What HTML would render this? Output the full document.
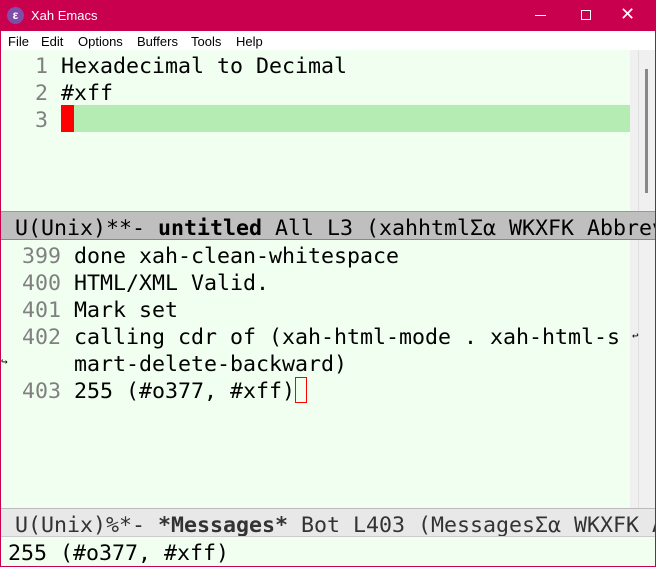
<!DOCTYPE html>
<html><head><meta charset="utf-8"><style>
*{margin:0;padding:0;box-sizing:border-box}
body{width:656px;height:567px;overflow:hidden;background:#c8004e;position:relative;font-family:"DejaVu Sans Mono","Liberation Mono",monospace}
.abs{position:absolute}
.title{left:0;top:0;width:656px;height:31px;background:#c8004e;color:#fff;font:13px "Liberation Sans",sans-serif}
.menu{left:1px;top:31px;width:654px;height:19px;background:#fff;font:13px "Liberation Sans",sans-serif;color:#000}
.menu span{position:absolute;top:3px}
.ed{background:#f0fff0;left:1px;width:629px}
.fr{background:#f0f0f0;left:630px;width:8px}
.sb{background:#f0f0f0;left:638px;width:17px;border-left:1px solid #e0e0e0}
.ln{font-size:21.6px;line-height:27px;white-space:pre;color:#000}
.num{color:#808080}
.ml{left:1px;width:654px;height:29px;font-size:21.6px;line-height:33px;white-space:pre;overflow:hidden}
</style></head><body>
<div class="abs title">
 <div class="abs" style="left:7px;top:7px;width:17px;height:17px;border-radius:50%;background:#7d4fa8;color:#fff;font:bold 12px 'Liberation Sans',sans-serif;text-align:center;line-height:17px">ε</div>
 <div class="abs" style="left:31px;top:8px">Xah Emacs</div>
 <div class="abs" style="left:535px;top:15px;width:11px;height:1px;background:#fff"></div>
 <div class="abs" style="left:581px;top:10px;width:10px;height:10px;border:1px solid #fff"></div>
 <div class="abs" style="left:620px;top:4px;font:18px 'Liberation Sans',sans-serif;color:#fff">✕</div>
</div>
<div class="abs menu"><span style="left:7px">File</span><span style="left:40px">Edit</span><span style="left:77px">Options</span><span style="left:136px">Buffers</span><span style="left:190px">Tools</span><span style="left:235px">Help</span></div>
<div class="abs ed" style="top:50px;height:161px"></div>
<div class="abs fr" style="top:50px;height:161px"></div>
<div class="abs sb" style="top:50px;height:161px"></div>
<div class="abs" style="left:645px;top:69px;width:3px;height:124px;background:#888"></div>
<div class="abs" style="left:61px;top:105px;width:569px;height:27px;background:#b4ecb4"></div>
<div class="abs" style="left:61px;top:105px;width:13px;height:27px;background:#f00"></div>
<div class="abs ln" style="left:22px;top:53px"><span class="num"> 1 </span>Hexadecimal to Decimal
<span class="num"> 2 </span>#xff
<span class="num"> 3 </span></div>
<div class="abs ml" style="top:211px;background:#bfbfbf;border-top:1px solid #999;border-bottom:1px solid #888;padding-left:14px">U(Unix)**- <b>untitled</b> All L3 (xahhtmlΣα WKXFK Abbrev</div>
<div class="abs ed" style="top:240px;height:268px"></div>
<div class="abs fr" style="top:240px;height:268px"></div>
<div class="abs sb" style="top:240px;height:268px"></div>
<div class="abs ln" style="left:22px;top:243px"><span class="num">399 </span>done xah-clean-whitespace
<span class="num">400 </span>HTML/XML Valid.
<span class="num">401 </span>Mark set
<span class="num">402 </span>calling cdr of (xah-html-mode . xah-html-s
<span class="num">    </span>mart-delete-backward)
<span class="num">403 </span>255 (#o377, #xff)</div>
<div class="abs" style="left:295px;top:377px;width:12px;height:26px;border:1px solid #f00"></div>
<div class="abs" style="left:632px;top:329px;font-size:11px">↩</div>
<div class="abs" style="left:1px;top:355px;font-size:11px">↪</div>
<div class="abs ml" style="top:508px;background:#e8e8e8;border-top:1px solid #bbb;border-bottom:1px solid #ccc;padding-left:14px;color:#333">U(Unix)%*- <b>*Messages*</b> Bot L403 (MessagesΣα WKXFK Abbrev</div>
<div class="abs ed" style="top:537px;height:29px;width:654px;background:#f0fff0"></div>
<div class="abs ln" style="left:8px;top:540px">255 (#o377, #xff)</div>
</body></html>
